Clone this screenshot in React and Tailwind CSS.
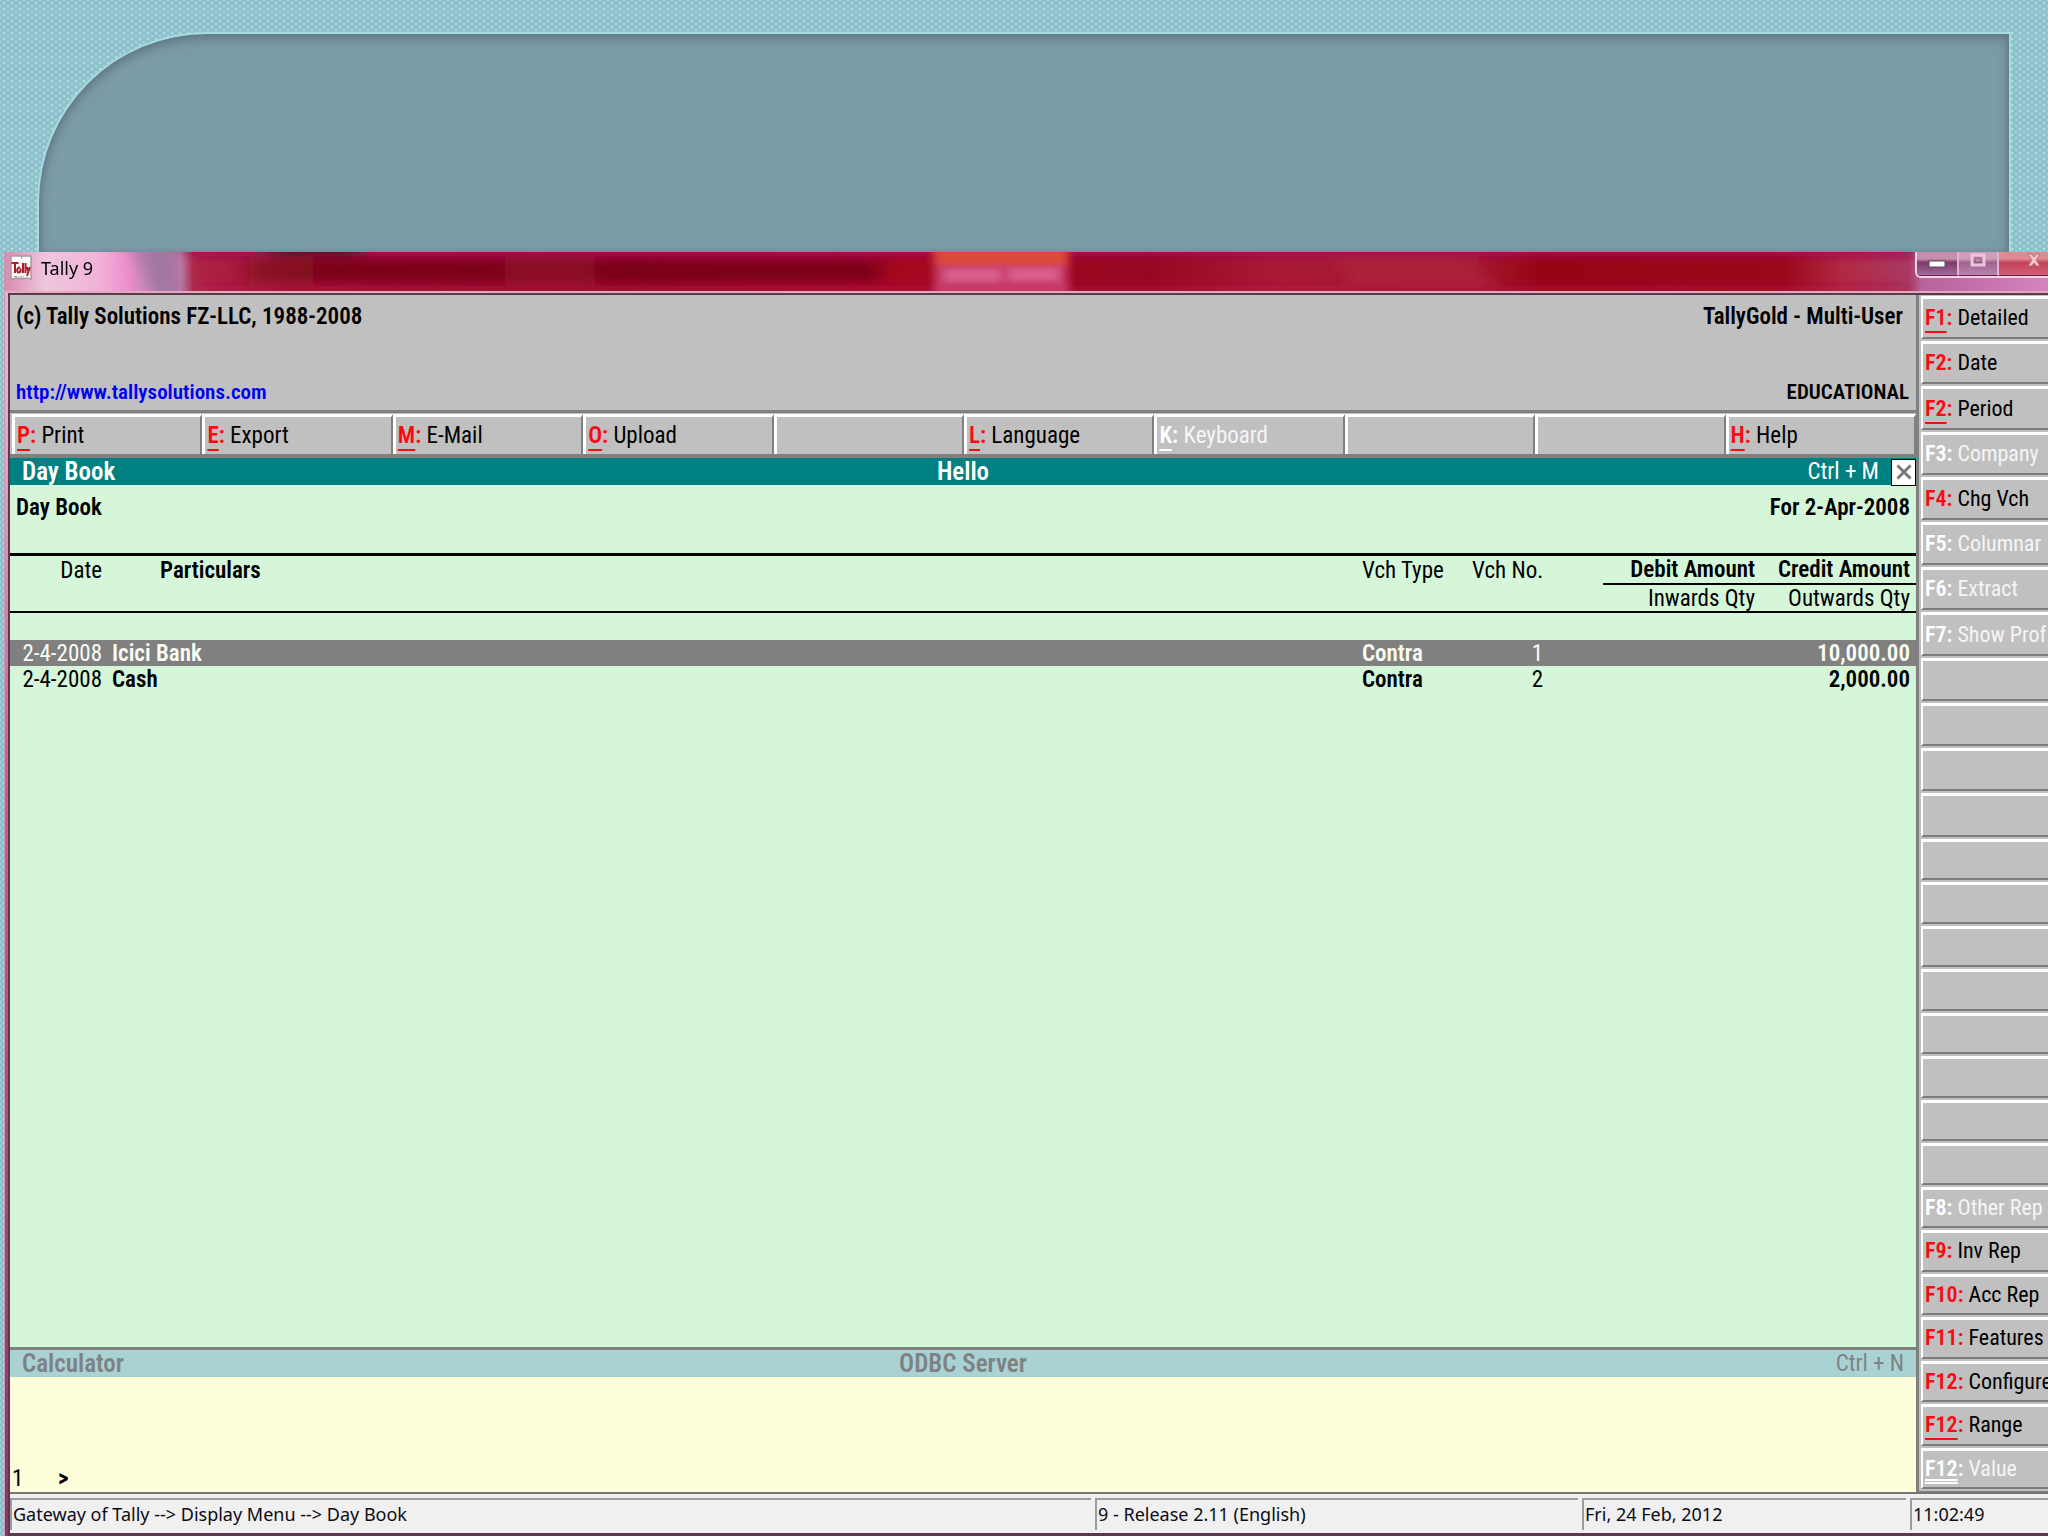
const TOOLBAR = [
  { key: "P", label: "Print" },
  { key: "E", label: "Export" },
  { key: "M", label: "E-Mail" },
  { key: "O", label: "Upload" },
  null,
  { key: "L", label: "Language" },
  { key: "K", label: "Keyboard", off: true },
  null,
  null,
  { key: "H", label: "Help" },
];

const SIDE_TOP = [
  { key: "F1", label: "Detailed", line: 1 },
  { key: "F2", label: "Date" },
  { key: "F2", label: "Period", line: 1 },
  { key: "F3", label: "Company", off: true },
  { key: "F4", label: "Chg Vch" },
  { key: "F5", label: "Columnar", off: true },
  { key: "F6", label: "Extract", off: true },
  { key: "F7", label: "Show Prof", off: true },
  null,
  null,
  null,
  null,
];

const SIDE_BOTTOM = [
  null,
  null,
  null,
  null,
  null,
  null,
  null,
  null,
  { key: "F8", label: "Other Rep", off: true },
  { key: "F9", label: "Inv Rep" },
  { key: "F10", label: "Acc Rep" },
  { key: "F11", label: "Features" },
  { key: "F12", label: "Configure" },
  { key: "F12", label: "Range", line: 1 },
  { key: "F12", label: "Value", off: true, line: 2 },
];

const ROWS = [
  { date: "2-4-2008", name: "Icici Bank", type: "Contra", no: "1", credit: "10,000.00", active: true },
  { date: "2-4-2008", name: "Cash", type: "Contra", no: "2", credit: "2,000.00" },
];

const UNDERLINE = {
  0: "",
  1: "underline decoration-2 underline-offset-[6px]",
  2: "underline decoration-double decoration-2 underline-offset-[3px]",
};

function KeyLabel({ item, line }) {
  return (
    <>
      <span className={item.off ? "font-semibold text-white" : "font-semibold text-[#fb0a12]"}>
        <span className={UNDERLINE[line]}>{item.key}</span>:
      </span>{" "}
      <span className={item.off ? "text-[#f6f4f6]" : "text-black"}>{item.label}</span>
    </>
  );
}

function ToolButton({ item }) {
  return (
    <button
      type="button"
      aria-label={item ? undefined : "Unassigned"}
      className="h-10 min-w-0 truncate border-t-3 border-r-2 border-l-3 border-t-white border-r-[#808080] border-l-white px-[2px] text-left"
    >
      {item && <KeyLabel item={item} line={1} />}
    </button>
  );
}

function SideButton({ item }) {
  return (
    <button
      type="button"
      aria-label={item ? undefined : "Unassigned"}
      className="mb-[2px] border-t-3 border-b-2 border-l-2 border-t-white border-b-[#7c7c7c] border-l-white pl-[2px] text-left whitespace-nowrap"
    >
      {item && <KeyLabel item={item} line={item.line || 0} />}
    </button>
  );
}

function TitleGlass() {
  return (
    <svg
      aria-hidden="true"
      className="absolute inset-0 h-full w-full"
      viewBox="0 0 2044 42"
      preserveAspectRatio="none"
    >
      <defs>
        <linearGradient id="glass" x1="0" x2="1" y1="0" y2="0">
          <stop offset="0" stopColor="#d98bb0" />
          <stop offset="0.02" stopColor="#efc6dc" />
          <stop offset="0.045" stopColor="#f0b4d8" />
          <stop offset="0.06" stopColor="#ee8fcb" />
          <stop offset="0.075" stopColor="#ba82b0" />
          <stop offset="0.086" stopColor="#c97ba8" />
          <stop offset="0.092" stopColor="#b02648" />
          <stop offset="0.14" stopColor="#9c0e2c" />
          <stop offset="0.3" stopColor="#91091f" />
          <stop offset="0.44" stopColor="#a5081f" />
          <stop offset="0.56" stopColor="#960820" />
          <stop offset="0.62" stopColor="#a81a34" />
          <stop offset="0.72" stopColor="#a51a30" />
          <stop offset="0.75" stopColor="#970514" />
          <stop offset="0.87" stopColor="#9a0818" />
          <stop offset="0.9" stopColor="#b12a44" />
          <stop offset="0.932" stopColor="#a93a62" />
          <stop offset="0.938" stopColor="#b9629c" />
          <stop offset="1" stopColor="#d583bf" />
        </linearGradient>
        <filter id="soft" x="-20%" y="-100%" width="140%" height="300%">
          <feGaussianBlur stdDeviation="9 5" />
        </filter>
        <filter id="softer" x="-20%" y="-100%" width="140%" height="300%">
          <feGaussianBlur stdDeviation="4 3" />
        </filter>
      </defs>
      <rect width="2044" height="42" fill="url(#glass)" />
      <g filter="url(#soft)">
        <rect x="180" y="-8" width="1730" height="12" fill="#a00c52" />
        <rect x="265" y="-6" width="90" height="10" fill="#4a0820" opacity="0.8" />
        <rect x="245" y="8" width="70" height="24" fill="#7c0a20" opacity="0.7" />
        <rect x="310" y="9" width="565" height="23" fill="#780519" opacity="0.9" />
        <rect x="500" y="6" width="90" height="30" fill="#9c1a34" opacity="0.5" />
        <rect x="200" y="36" width="1700" height="8" fill="#b01848" opacity="0.6" />
        <path d="M125 -6h45l10 50h-30z" fill="#8d6f98" opacity="0.6" />
        <path d="M1330 6h130l30 30h-140z" fill="#b02840" opacity="0.6" />
      </g>
      <g filter="url(#softer)">
        <rect x="929" y="-4" width="135" height="50" fill="#c63a68" />
        <rect x="929" y="-6" width="135" height="20" fill="#dc4a3c" />
        <rect x="940" y="18" width="56" height="14" fill="#d95f8e" />
        <rect x="1004" y="17" width="50" height="14" fill="#d95f8e" />
      </g>
    </svg>
  );
}

function AppIcon() {
  return (
    <svg aria-hidden="true" className="h-[26px] w-[22px]" viewBox="0 0 22 26">
      <path d="M1 1h20v23l-4-1-5 1-5-1-6 1z" fill="#fdfbfb" stroke="#a79aa0" strokeWidth="1.500" />
      <path d="M11 1l1 3" stroke="#a79aa0" />
      <path
        d="M1.500 8h7M5 8v10M10 13c-3-2-4 5-1 4.500 1 0 1.500-2 1.500-4v4M13 8v10M15.500 8v10M17 12l1.500 5M20 12l-3 9"
        fill="none"
        stroke="#b01a26"
        strokeWidth="2"
      />
      <path d="M4 21.500h3M9 22h5" stroke="#9a9a9a" />
    </svg>
  );
}

function WindowButtons() {
  return (
    <div className="flex h-[26px] w-[133px] shrink-0 overflow-hidden rounded-bl-md border-b-2 border-l-2 border-[#f1d3e4]">
      <button
        type="button"
        aria-label="Minimize"
        className="flex w-[42px] items-start justify-center border-r-2 border-b border-r-[#e3b6d0] border-b-[#6a2048] bg-linear-to-b from-[#c58fab] from-30% via-[#7d3a68] via-45% to-[#a5699c] pt-2"
      >
        <svg aria-hidden="true" className="h-2 w-[18px]" viewBox="0 0 18 8">
          <rect x="1" y="1" width="16" height="6" fill="#fff" stroke="#5c4a5c" />
        </svg>
      </button>
      <button
        type="button"
        aria-label="Restore"
        className="flex w-10 items-start justify-center border-r-2 border-b border-r-[#e3b6d0] border-b-[#6a2048] bg-linear-to-b from-[#cf9dba] from-30% via-[#a0628f] via-45% to-[#b983b0] pt-px"
      >
        <svg aria-hidden="true" className="h-[14px] w-4" viewBox="0 0 16 14">
          <rect x="2" y="2" width="12" height="10" fill="none" stroke="#e9c6dc" strokeWidth="3" />
          <rect x="5" y="5" width="6" height="4" fill="#b78bab" stroke="#94587f" />
        </svg>
      </button>
      <button
        type="button"
        aria-label="Close window"
        className="flex flex-1 items-start justify-end border-b border-b-[#6a2048] bg-linear-to-b from-[#dd8a92] from-30% via-[#c5405a] via-45% to-[#cf5f78] pt-px pr-[7px]"
      >
        <svg aria-hidden="true" className="h-[14px] w-[14px]" viewBox="0 0 14 14">
          <path d="M1 1h4l2 3 2-3h4L9.200 7 13 13H9l-2-3-2 3H1l3.800-6z" fill="#f2c3c8" stroke="#b4566a" strokeWidth="0.700" />
        </svg>
      </button>
    </div>
  );
}

function TitleBar() {
  return (
    <header className="relative h-[41px] overflow-hidden border-b-2 border-[#e3a9bd]">
      <TitleGlass />
      <div className="relative flex items-start justify-between pl-[5px]">
        <div className="flex items-center gap-[9px] pt-[3px]">
          <AppIcon />
          <h1 className="font-['Noto_Sans',sans-serif] text-[18px] leading-[26px] text-black">
            Tally 9
          </h1>
        </div>
        <WindowButtons />
      </div>
    </header>
  );
}

function Masthead() {
  return (
    <section className="flex h-[118px] flex-col justify-between border-b-3 border-[#808080] pt-2 pr-[7px] pb-1 pl-[6px] font-semibold">
      <div className="flex justify-between pr-[6px]">
        <span>(c) Tally Solutions FZ-LLC, 1988-2008</span>
        <span>TallyGold - Multi-User</span>
      </div>
      <div className="flex justify-between text-[21px]">
        <a href="http://www.tallysolutions.com" className="text-[#0000f0]">
          http://www.tallysolutions.com
        </a>
        <span>EDUCATIONAL</span>
      </div>
    </section>
  );
}

function DayBook() {
  return (
    <section className="flex flex-1 flex-col bg-[#d5f6d9]">
      <div className="grid h-[27px] grid-cols-[1fr_auto_1fr] items-center bg-[#008080] text-white">
        <h2 className="pl-3 text-[25px] leading-[26px] font-semibold">Day Book</h2>
        <span className="text-[25px] leading-[26px] font-semibold">Hello</span>
        <span className="flex items-center justify-end gap-3">
          <span>Ctrl + M</span>
          <button
            type="button"
            aria-label="Close Day Book"
            className="flex h-[27px] w-[25px] items-center justify-center border border-black bg-white"
          >
            <svg aria-hidden="true" className="h-4 w-4" viewBox="0 0 16 16">
              <path d="M1.500 1.500l13 13M14.500 1.500l-13 13" stroke="#7b787c" strokeWidth="3" />
            </svg>
          </button>
        </span>
      </div>
      <div className="flex h-[68px] justify-between px-[6px] pt-[9px] font-semibold">
        <span>Day Book</span>
        <span>For 2-Apr-2008</span>
      </div>
      <table className="w-full table-fixed border-collapse border-t-3 border-black leading-[25px]">
        <colgroup>
          <col className="w-24" />
          <col />
          <col className="w-[110px]" />
          <col className="w-[131px]" />
          <col className="w-[156px]" />
          <col className="w-[157px]" />
        </colgroup>
        <thead>
          <tr className="h-[29px]">
            <th scope="col" className="pt-px pr-1 text-right font-normal">Date</th>
            <th scope="col" className="pt-px pl-[54px] text-left font-semibold">Particulars</th>
            <th scope="col" className="pt-px text-left font-normal whitespace-nowrap">Vch Type</th>
            <th scope="col" className="pt-px pr-[60px] text-right font-normal whitespace-nowrap">Vch No.</th>
            <th scope="col" className="border-b-2 border-black pt-px pr-1 text-right font-semibold">Debit Amount</th>
            <th scope="col" className="border-b-2 border-black pt-px pr-[6px] text-right font-semibold">Credit Amount</th>
          </tr>
          <tr className="h-7 border-b-2 border-black">
            <td colSpan={4} />
            <th scope="col" className="pt-px pr-1 text-right font-normal">Inwards Qty</th>
            <th scope="col" className="pt-px pr-[6px] text-right font-normal">Outwards Qty</th>
          </tr>
        </thead>
        <tbody>
          <tr className="h-7">
            <td colSpan={6} />
          </tr>
          {ROWS.map((r) => (
            <tr key={r.no} className={r.active ? "bg-[#808080] text-[#fafcf4]" : "text-black"}>
              <td className="pt-px pr-1 text-right">{r.date}</td>
              <td className="pt-px pl-[6px] font-semibold">{r.name}</td>
              <td className="pt-px font-semibold">{r.type}</td>
              <td className="pt-px pr-[60px] text-right">{r.no}</td>
              <td />
              <td className="pt-px pr-[6px] text-right font-semibold">{r.credit}</td>
            </tr>
          ))}
        </tbody>
      </table>
    </section>
  );
}

function Calculator() {
  return (
    <section className="border-t-3 border-[#808080]">
      <div className="grid h-[27px] grid-cols-[1fr_auto_1fr] items-center bg-[#a9d3d3] px-3 text-[#7f8284]">
        <h2 className="text-[25px] leading-[26px] font-semibold">Calculator</h2>
        <span className="text-[25px] leading-[26px] font-semibold">ODBC Server</span>
        <span className="text-right">Ctrl + N</span>
      </div>
      <label className="flex h-[115px] items-end bg-[#fefedb] leading-[26px]">
        <span className="w-12 pl-[2px]">1</span>
        <span className="font-bold">&gt;</span>
        <input aria-label="Calculator input" className="h-[26px] flex-1 bg-transparent pl-2 outline-none" />
      </label>
    </section>
  );
}

function StatusCell({ children, width }) {
  return (
    <span className={`${width} overflow-hidden border-t-2 border-l-2 border-[#9b9b9b] pl-px whitespace-nowrap`}>
      {children}
    </span>
  );
}

function StatusBar() {
  return (
    <footer className="flex h-[41px] gap-1 border-t-2 border-[#7c7378] bg-[#f0f0f0] pt-1 pb-[3px] font-['Noto_Sans',sans-serif] text-[18px] leading-[29px] text-[#0c0c14]">
      <StatusCell width="flex-1">Gateway of Tally --&gt; Display Menu --&gt; Day Book</StatusCell>
      <StatusCell width="w-[483px]">9 - Release 2.11 (English)</StatusCell>
      <StatusCell width="w-[324px]">Fri, 24 Feb, 2012</StatusCell>
      <StatusCell width="w-[138px]">11:02:49</StatusCell>
    </footer>
  );
}

export default function App() {
  return (
    <div className="flex h-screen flex-col overflow-hidden bg-[#8dbfc9] bg-[radial-gradient(circle,#a9dbe2_1px,transparent_2px),radial-gradient(circle,#a3d2da_1px,transparent_2px)] bg-[size:8px_6px] bg-[position:0_0,4px_3px] font-['Roboto_Condensed','Roboto',sans-serif] text-[23px] leading-7 text-black">
      <div className="mt-8 mr-[37px] ml-[37px] h-[220px] rounded-tl-[170px] border-t-2 border-r-2 border-l-2 border-[#a6dbe3] bg-[#7b9ba6] shadow-[inset_0_8px_12px_-4px_#5f7683,inset_-6px_0_10px_-5px_#5f7683,inset_6px_0_10px_-5px_#5f7683]" />
      <main className="ml-1 flex min-h-0 flex-1 flex-col border-l border-[#c59ab4] bg-linear-to-b from-[#ecaed0] from-10% via-[#c9609c] via-40% to-[#8a3468]">
        <TitleBar />
        <div className="ml-[3px] flex min-h-0 flex-1 flex-col border-t-2 border-b-3 border-l-2 border-[#5a3a4c]">
          <div className="flex min-h-0 flex-1 bg-[#c1c0c1]">
            <div className="flex min-w-0 flex-1 flex-col border-r-3 border-[#808080]">
              <Masthead />
              <nav aria-label="Commands" className="grid grid-cols-10 border-b-4 border-[#808080] pt-px pl-[2px]">
                {TOOLBAR.map((item, i) => (
                  <ToolButton key={i} item={item} />
                ))}
              </nav>
              <DayBook />
              <Calculator />
            </div>
            <nav aria-label="Function keys" className="flex w-[129px] shrink-0 flex-col border-b border-[#808080] pt-px pl-[2px] text-[22px]">
              <div className="grid flex-[543_1_0%] auto-rows-fr">
                {SIDE_TOP.map((item, i) => (
                  <SideButton key={i} item={item} />
                ))}
              </div>
              <div className="grid flex-[653_1_0%] auto-rows-fr">
                {SIDE_BOTTOM.map((item, i) => (
                  <SideButton key={i} item={item} />
                ))}
              </div>
            </nav>
          </div>
          <StatusBar />
        </div>
      </main>
    </div>
  );
}
